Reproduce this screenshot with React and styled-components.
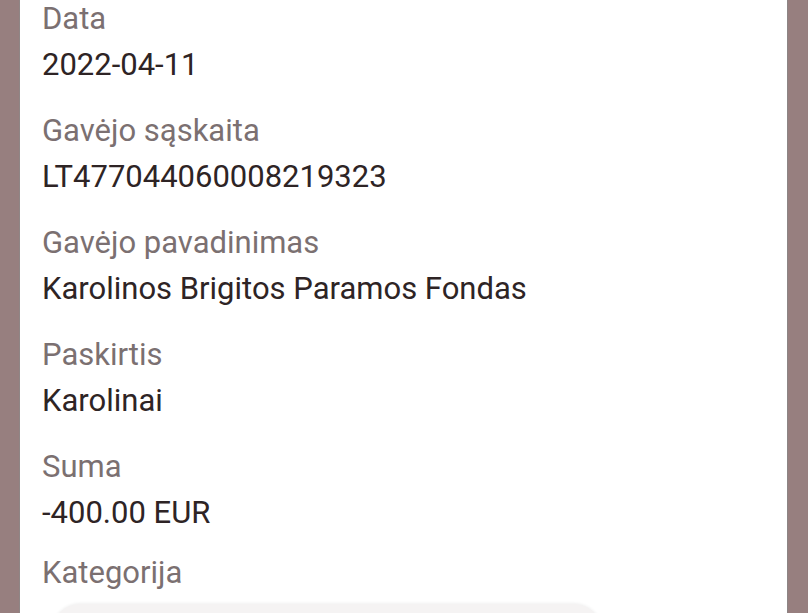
import React from 'react';
import styled, { createGlobalStyle } from 'styled-components';

const GlobalStyle = createGlobalStyle`
    html, body {
        margin: 0;
        padding: 0;
        height: 613px;
        overflow: hidden;
        background: #977f7f;
    }
    body {
        font-family: Roboto, "Noto Sans", "Liberation Sans", sans-serif;
    }
`

const Screen = styled.div`
    display: flex;
    height: 613px;
    padding: 0 21px 0 20px;
    box-sizing: border-box;
`

const Sheet = styled.div`
    flex: 1;
    background: #ffffff;
    box-shadow: 1px 0 0 #8c8585, -1px 0 0 #8f8686;
    padding: 0 22px;
    overflow: hidden;
`

const Details = styled.div`
    display: flex;
    flex-direction: column;
    gap: 20px;
    margin-top: -4px;
`

const Entry = styled.div`
    display: flex;
    flex-direction: column;
    margin-top: ${p => (p.$tight ? '-6px' : '0')};
`

const Label = styled.div`
    font-size: 31px;
    line-height: 46px;
    color: #7b7071;
`

const Value = styled.div`
    font-size: 31px;
    line-height: 46px;
    color: #2e2425;
`

const Picker = styled.div`
    margin: 8px 0 0 10px;
    width: 550px;
    height: 60px;
    border-radius: 28px;
    background: #f5f3f3;
    box-shadow: 0 -1px 3px rgba(0, 0, 0, 0.06);
`

const rows = [
    { label: 'Data', value: '2022-04-11' },
    { label: 'Gavėjo sąskaita', value: 'LT477044060008219323' },
    { label: 'Gavėjo pavadinimas', value: 'Karolinos Brigitos Paramos Fondas' },
    { label: 'Paskirtis', value: 'Karolinai' },
    { label: 'Suma', value: '-400.00 EUR' },
]

export default function App() {
    return (
        <>
            <GlobalStyle />
            <Screen>
                <Sheet>
                    <Details>
                        {rows.map((row, i) => (
                            <Entry key={i}>
                                <Label>{row.label}</Label>
                                <Value>{row.value}</Value>
                            </Entry>
                        ))}
                        <Entry $tight>
                            <Label>Kategorija</Label>
                            <Picker />
                        </Entry>
                    </Details>
                </Sheet>
            </Screen>
        </>
    )
}
